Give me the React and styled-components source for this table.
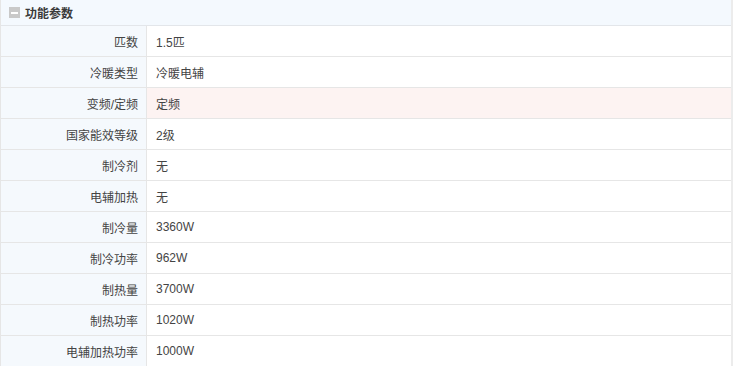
import React from 'react';
import styled, { createGlobalStyle } from 'styled-components';

const GlobalStyle = createGlobalStyle`
  html, body {
    margin: 0;
    padding: 0;
    background: #fff;
  }
  body {
    font-family: "Liberation Sans", "Noto Sans CJK SC", sans-serif;
    font-size: 12px;
    color: #444;
  }
`;

const Panel = styled.div`
  width: 733px;
  border-left: 1px solid #e6e6e6;
  border-right: 2px solid #ececec;
  box-sizing: border-box;
`;

const Header = styled.div`
  display: flex;
  align-items: center;
  gap: 5px;
  height: 25px;
  padding-left: 8px;
  background: #f4f9fe;
  border-bottom: 1px solid #e3e6ea;
  font-weight: bold;
  color: #3a3a3a;
`;

const Toggle = styled.span`
  width: 11px;
  height: 11px;
  background: #c9c9c9;
  display: flex;
  align-items: center;
  justify-content: center;

  &::after {
    content: '';
    width: 7px;
    height: 2px;
    background: #fff;
  }
`;

const Row = styled.div`
  display: grid;
  grid-template-columns: 146px 1fr;
  height: 30px;
  border-bottom: 1px solid #e6e6e6;
  background: ${({ $hl }) => ($hl ? '#fdf3f2' : '#fff')};
`;

const Label = styled.div`
  display: flex;
  align-items: center;
  justify-content: flex-end;
  padding-right: 8px;
  background: #f5f9fd;
  border-right: 1px solid #e6e6e6;
`;

const Value = styled.div`
  display: flex;
  align-items: center;
  padding-left: 9px;
`;

const params = [
  ['匹数', '1.5匹'],
  ['冷暖类型', '冷暖电辅'],
  ['变频/定频', '定频', true],
  ['国家能效等级', '2级'],
  ['制冷剂', '无'],
  ['电辅加热', '无'],
  ['制冷量', '3360W'],
  ['制冷功率', '962W'],
  ['制热量', '3700W'],
  ['制热功率', '1020W'],
  ['电辅加热功率', '1000W'],
];

export default function App() {
  return (
    <>
      <GlobalStyle />
      <Panel>
        <Header>
          <Toggle />
          功能参数
        </Header>
        {params.map(([k, v, hl]) => (
          <Row key={k} $hl={hl}>
            <Label>{k}</Label>
            <Value>{v}</Value>
          </Row>
        ))}
      </Panel>
    </>
  );
}
